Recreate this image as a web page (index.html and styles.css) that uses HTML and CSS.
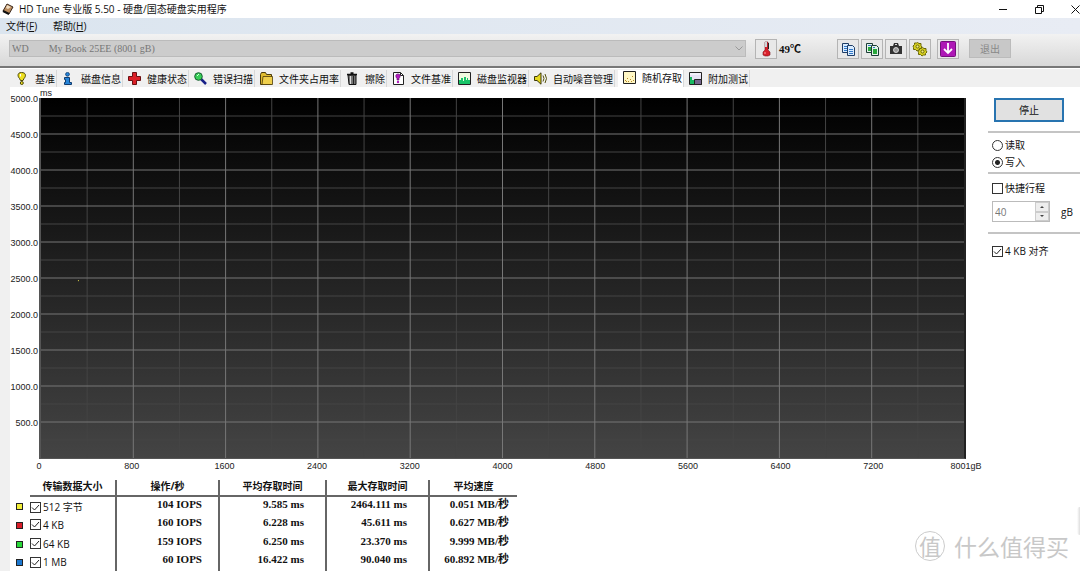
FILE: index.html
```html
<!DOCTYPE html>
<html lang="zh-CN">
<head>
<meta charset="utf-8">
<title>HD Tune 专业版 5.50 - 硬盘/国态硬盘实用程序</title>
<link rel="stylesheet" href="styles.css">
</head>
<body>
<div class="app">
  <header class="titlebar">
    <svg class="app-icon" viewBox="0 0 12 12"><path d="M1 8 5 1l6 3-4 7z" fill="#b98a5c" stroke="#3a281c"/><path d="M5 2l4 2-3 2-2-1z" fill="#f0dcc0"/><path d="M1 8l6 3" stroke="#111" stroke-width="2"/></svg>
    <h1 class="title">HD Tune 专业版 5.50 - 硬盘/国态硬盘实用程序</h1>
    <div class="win-controls">
      <button class="win-btn" aria-label="最小化"><svg viewBox="0 0 9 9"><path d="M0 4.500h8" stroke="#111"/></svg></button>
      <button class="win-btn" aria-label="还原"><svg viewBox="0 0 9 9" fill="none" stroke="#111"><path d="M.5 2.500h6v6h-6z"/><path d="M2.500 2.500v-2h6v6h-2"/></svg></button>
      <button class="win-btn" aria-label="关闭"><svg viewBox="0 0 9 9"><path d="M.5.5l8 8M8.500.5l-8 8" stroke="#111"/></svg></button>
    </div>
  </header>

  <nav class="menubar">
    <button class="menu-item">文件(<u>F</u>)</button>
    <button class="menu-item">帮助(<u>H</u>)</button>
  </nav>

  <div class="toolbar">
    <select class="drive" aria-label="驱动器" disabled>
      <option>WD&nbsp;&nbsp;&nbsp;&nbsp;&nbsp;&nbsp;&nbsp;&nbsp;My Book 25EE (8001 gB)</option>
    </select>
    <button class="tool" aria-label="温度"><svg viewBox="0 0 16 16"><path d="M7 1h3v8l2 2v3l-2 1H7l-2-1v-3l2-2z" fill="#d8202c" stroke="#7a1a20" stroke-width=".6"/><path d="M7 1h2v5H7z" fill="#cdd6da"/><path d="M10 2h1v6h-1" fill="#222"/><path d="M7 11v2" stroke="#ffa0a0"/></svg></button>
    <output class="temp">49℃</output>
    <div class="tool-group">
      <button class="tool" aria-label="复制文本"><svg viewBox="0 0 16 16"><path d="M2.500 2.500h6v9h-6z" fill="#d9ecff" stroke="#1f3d66"/><path d="M7.500 4.500h5l2 2v8h-7z" fill="#d9ecff" stroke="#1f3d66"/><path d="M4 5.500h3M4 7.500h3M4 9.500h3M9 8.500h4M9 10.500h4M9 12.500h4" stroke="#3278c8"/></svg></button>
      <button class="tool" aria-label="复制截图"><svg viewBox="0 0 16 16"><path d="M2.500 2.500h6v9h-6z" fill="#e4f4ea" stroke="#1c3d38"/><path d="M7.500 4.500h5l2 2v8h-7z" fill="#e4f4ea" stroke="#1c3d38"/><path d="M4 6h3v4H4zM9 8h4v5H9z" fill="#28a83c"/><path d="M4 4.500h3M9 6.500h2" stroke="#3278c8"/></svg></button>
      <button class="tool" aria-label="保存截图"><svg viewBox="0 0 16 16"><path d="M2 5h3l1-3h4l1 3h3v8H2z" fill="#333"/><path d="M7 3h2v1H7z" fill="#ddd"/><circle cx="8" cy="9" r="2.500" fill="#999" stroke="#eee" stroke-width=".8"/></svg></button>
      <button class="tool" aria-label="选项"><svg viewBox="0 0 16 16" fill="#d8d020" stroke="#6b6908"><path d="M5.500 1.500l1.500 1 2 0 0 2 1 1.500-1.500 1.500v1.500h-2l-1.500 1-1.500-1.500h-2v-2l-.5-1.500 1.500-1.500v-1.500h2z"/><path d="M10.500 6.500l1.500 1h2v2l1 1.500-1.500 1.500v1.500h-2l-1.500 1-1.500-1.500h-2v-2l-.5-1.500 1.500-1v-1.500h2z"/><circle cx="5.500" cy="5.500" r="1.500" fill="#f2ee80"/><circle cx="10.500" cy="10.500" r="1.500" fill="#f2ee80"/></svg></button>
    </div>
    <button class="tool tool-save" aria-label="保存"><svg viewBox="0 0 16 16"><rect x=".5" y=".5" width="15" height="15" rx="1" fill="#ae18b6" stroke="#74107c"/><path d="M8 2v10M4 8l4 4 4-4" fill="none" stroke="#fff" stroke-width="1.800"/></svg></button>
    <button class="exit" disabled>退出</button>
  </div>

  <div class="tabs" role="tablist">
    <button class="tab" role="tab"><svg viewBox="0 0 13 13"><path d="M5.500.5c5 0 4.500 4 2.500 6L7 8.500H4.500L3.500 6.500C1.500 4.500 1 .5 5.500.5z" fill="#eee022" stroke="#4d4807"/><path d="M4.500 2v2.500" stroke="#fff"/><circle cx="5.800" cy="11" r="1.500" fill="#eee022" stroke="#4d4807"/></svg>基准</button>
    <button class="tab" role="tab"><svg viewBox="0 0 13 13"><circle cx="5.500" cy="2.300" r="1.900" fill="#2584d8" stroke="#103c70" stroke-width=".8"/><path d="M2.500 5.500h5v5h2v2h-7v-2h1v-3h-1z" fill="#2584d8" stroke="#103c70"/></svg>磁盘信息</button>
    <button class="tab" role="tab"><svg viewBox="0 0 13 13"><path d="M4.500.5h4v4h4v4h-4v4h-4v-4h-4v-4h4z" fill="#dc2028" stroke="#6b1013"/></svg>健康状态</button>
    <button class="tab" role="tab"><svg viewBox="0 0 13 13"><path d="M7 7l5 5" stroke="#182088" stroke-width="2.500"/><circle cx="4.500" cy="4.500" r="3.800" fill="#38d058" stroke="#185c30"/><path d="M3 4l2-2" stroke="#d8ffe0"/></svg>错误扫描</button>
    <button class="tab" role="tab"><svg viewBox="0 0 13 13"><path d="M.5 2.500l1-2h4l1 2h5v10h-11z" fill="#e0bc30" stroke="#4c3b0a"/><path d="M3 4.500h9.500v8H2z" fill="#efcf4c" stroke="#4c3b0a" stroke-width=".8"/></svg>文件夹占用率</button>
    <button class="tab" role="tab"><svg viewBox="0 0 13 13"><path d="M2 3h8v9.500H3z" fill="#777" stroke="#111"/><path d="M1 2.500h10M4.500 1h3" stroke="#111" stroke-width="1.500"/><path d="M4.500 4v8" stroke="#ddd"/><path d="M7.500 4v8" stroke="#222"/></svg>擦除</button>
    <button class="tab" role="tab"><svg viewBox="0 0 13 13"><path d="M1.500.5h7l3 3v9h-10z" fill="#fff" stroke="#222"/><path d="M8.500.5v3h3" fill="none" stroke="#222"/><path d="M6 2c3 0 2.500 3 1 4.500V8H5V6.500C3.500 5 3 2 6 2z" fill="#b41cc0" stroke="#50105c" stroke-width=".6"/><circle cx="6" cy="10" r="1.200" fill="#b41cc0"/></svg>文件基准</button>
    <button class="tab" role="tab"><svg viewBox="0 0 13 13"><path d="M.5.500h12v12H.5z" fill="#f0fae0" stroke="#222"/><path d="M1 12V8h2V6h2v3h1V5h2v3h1V6h1v2h2v4z" fill="#18c468"/></svg>磁盘监视器</button>
    <button class="tab" role="tab"><svg viewBox="0 0 13 13"><path d="M.5 4.500H3L7 .8v11.400L3 8.500H.5z" fill="#e5d820" stroke="#3c380a"/><path d="M9 3.500q2 3 0 6M11 2q3 4.500 0 9" fill="none" stroke="#55510e"/></svg>自动噪音管理</button>
    <button class="tab tab-active" role="tab" aria-selected="true"><svg viewBox="0 0 13 13"><path d="M.5.500h12v12H.5z" fill="#fff7c4" stroke="#222"/><path d="M2 9.500h1M4 7.500h1M5 10.500h1M7 8.500h1M9 5.500h1M10 9.500h1M8 10.500h1M3 10.500h1" stroke="#b88828"/></svg>随机存取</button>
    <button class="tab" role="tab"><svg viewBox="0 0 13 13"><path d="M.5.500h12v12H.5z" fill="#e7e2f5" stroke="#222"/><path d="M1 12V5h2v3h2v4z" fill="#18b860"/><path d="M5.500 7.500h7v5h-7z" fill="#75668e" stroke="#222"/><path d="M1 2h11" stroke="#fff"/></svg>附加测试</button>
  </div>

  <main class="page">
    <section class="results">
      <div class="chart">
        <div class="y-axis">
          <span>5000.0</span><span>4500.0</span><span>4000.0</span><span>3500.0</span><span>3000.0</span><span>2500.0</span><span>2000.0</span><span>1500.0</span><span>1000.0</span><span>500.0</span>
        </div>
        <div class="plot-area">
          <span class="unit">ms</span>
          <svg class="plot" id="plot" role="img" aria-label="存取时间">
            <defs><linearGradient id="shade" x2="0" y2="1"><stop stop-color="#000"/><stop offset="1" stop-color="#444"/></linearGradient></defs>
            <rect width="100%" height="100%" fill="url(#shade)"/>
          </svg>
          <div class="x-axis">
            <span>0</span><span>800</span><span>1600</span><span>2400</span><span>3200</span><span>4000</span><span>4800</span><span>5600</span><span>6400</span><span>7200</span><span>8001gB</span>
          </div>
        </div>
      </div>

      <table class="stats">
        <thead>
          <tr><td class="key"></td><th class="size">传输数据大小</th><th class="iops">操作/秒</th><th class="avg">平均存取时间</th><th class="max">最大存取时间</th><th class="speed">平均速度</th></tr>
        </thead>
        <tbody>
          <tr><td class="key"><i class="swatch yellow"></i></td><td class="size"><label class="option"><input class="check" type="checkbox" checked>512 字节</label></td><td class="iops">104 IOPS</td><td class="avg">9.585 ms</td><td class="max">2464.111 ms</td><td class="speed">0.051 MB/秒</td></tr>
          <tr><td class="key"><i class="swatch red"></i></td><td class="size"><label class="option"><input class="check" type="checkbox" checked>4 KB</label></td><td class="iops">160 IOPS</td><td class="avg">6.228 ms</td><td class="max">45.611 ms</td><td class="speed">0.627 MB/秒</td></tr>
          <tr><td class="key"><i class="swatch green"></i></td><td class="size"><label class="option"><input class="check" type="checkbox" checked>64 KB</label></td><td class="iops">159 IOPS</td><td class="avg">6.250 ms</td><td class="max">23.370 ms</td><td class="speed">9.999 MB/秒</td></tr>
          <tr><td class="key"><i class="swatch blue"></i></td><td class="size"><label class="option"><input class="check" type="checkbox" checked>1 MB</label></td><td class="iops">60 IOPS</td><td class="avg">16.422 ms</td><td class="max">90.040 ms</td><td class="speed">60.892 MB/秒</td></tr>
        </tbody>
      </table>
    </section>

    <aside class="side">
      <div class="group group-run"><button class="stop">停止</button></div>
      <div class="group group-mode">
        <label class="option"><input class="radio" type="radio" name="mode">读取</label>
        <label class="option"><input class="radio" type="radio" name="mode" checked>写入</label>
      </div>
      <div class="group group-stroke">
        <label class="option"><input class="check" type="checkbox">快捷行程</label>
        <div class="size-row">
          <div class="spinner">
            <input class="spin-value" id="stroke" type="text" value="40" disabled>
            <div class="spin-buttons"><button class="spin up" aria-label="增加"></button><button class="spin down" aria-label="减少"></button></div>
          </div>
          <label for="stroke">gB</label>
        </div>
      </div>
      <div class="group group-align">
        <label class="option"><input class="check" type="checkbox" checked>4 KB 对齐</label>
      </div>
    </aside>
  </main>

  <div class="watermark"><span class="seal">值</span><span>什么值得买</span></div>
  <div class="edge-shadow"></div>
</div>
<script src="plot.js"></script>
</body>
</html>
```
FILE: plot.js
```js
const plot = document.getElementById("plot");

function line(x1, y1, x2, y2, kind) {
  const el = document.createElementNS("http://www.w3.org/2000/svg", "line");
  Object.entries({ x1, y1, x2, y2, class: kind }).forEach(([k, v]) => el.setAttribute(k, v));
  plot.append(el);
}

// Minor lines first, so that the major ones cross over them.
for (const major of [false, true]) {
  for (let i = major ? 2 : 1; i < 20; i += 2) {
    const at = i * 5 + "%";
    line(at, "0", at, "100%", major ? "major" : "minor");
    line("0", at, "100%", at, major ? "major" : "minor");
  }
}

const dot = document.createElementNS("http://www.w3.org/2000/svg", "rect");
Object.entries({ x: "4%", y: "50.6%", width: 1, height: 1, fill: "#e6dc50" })
  .forEach(([k, v]) => dot.setAttribute(k, v));
plot.append(dot);
```
FILE: styles.css
```css
* { box-sizing: border-box; }

body {
  margin: 0;
  background: #f0f0f0;
  color: #111;
  font: 10px/14px "Open Sans", "Noto Sans CJK SC", sans-serif;
}

button, input, select {
  margin: 0;
  padding: 0;
  border: 0;
  background: none;
  color: inherit;
  font: inherit;
}

svg { display: block; }

.app {
  position: relative;
  display: flex;
  flex-direction: column;
  min-height: 100vh;
  overflow: hidden;
}

.titlebar {
  display: flex;
  align-items: center;
  gap: 5px;
  height: 18px;
  padding-left: 2px;
  background: #fff;
}
.app-icon { width: 12px; height: 12px; }
.title { margin: 0; font-size: 10px; font-weight: 400; white-space: nowrap; }
.win-controls { display: flex; gap: 27px; margin-left: auto; }
.win-btn { width: 9px; height: 9px; }
.win-btn svg { width: 9px; height: 9px; }

.menubar {
  display: flex;
  gap: 16px;
  height: 16px;
  padding-left: 6px;
  background: linear-gradient(90deg, #dbe5ef, #e8ecf4);
}

.toolbar {
  display: flex;
  align-items: center;
  height: 34px;
  padding: 0 69px 3px 9px;
  border-bottom: 2px solid #777;
  background: linear-gradient(#f2f2f2, #d8d8d8);
}
.drive {
  flex: 1;
  min-width: 0;
  height: 17px;
  padding: 0 14px 0 2px;
  border: 1px solid #bbb;
  appearance: none;
  background: #ccc url("data:image/svg+xml,%3Csvg xmlns='http://www.w3.org/2000/svg' width='8' height='5'%3E%3Cpath d='M.5.5 4 4 7.5.5' fill='none' stroke='%23999'/%3E%3C/svg%3E") no-repeat right 2px center;
  color: #777;
  opacity: 1;
  font: 10px/14px "Liberation Serif", serif;
}
.tool {
  display: grid;
  place-items: center;
  flex: none;
  width: 22px;
  height: 20px;
  border: 1px solid #b4b4b4;
  background: #e8e8e8;
}
.tool svg { width: 16px; height: 16px; }
.drive + .tool { margin-left: 9px; }
.temp {
  width: 60px;
  padding-left: 2px;
  font: bold 11px/14px "Liberation Serif", "Noto Sans CJK SC", serif;
}
.tool-group { display: flex; gap: 2px; }
.tool-save { margin-left: 6px; }
.exit {
  flex: none;
  width: 42px;
  height: 19px;
  margin-left: 10px;
  border: 1px solid #bbb;
  background: #c8c8c8;
  color: #888;
}

.tabs {
  display: flex;
  height: 19px;
  padding: 1px 0 0 11px;
  border-top: 1px solid #fff;
}
.tab {
  display: flex;
  align-items: center;
  gap: 6px;
  padding: 0 1px 0 5px;
  border-right: 1px solid #d8d8d8;
  white-space: nowrap;
}
.tab svg { flex: none; width: 13px; height: 13px; }
.tab-active { margin-left: 3px; padding-bottom: 2px; background: #fff; }

.page {
  display: flex;
  flex: 1;
  gap: 22px;
  margin-left: 10px;
  background: #fff;
}
.results { display: flex; flex: 1; flex-direction: column; min-width: 0; }

.chart {
  display: flex;
  color: #222;
  font: 9px/12px "Liberation Sans", Arial, sans-serif;
}
.y-axis { display: flex; flex: none; flex-direction: column; width: 29px; padding-top: 6px; }
.y-axis span {
  height: 36px;
  padding-right: 1px;
  text-align: right;
}
.plot-area { flex: 1; min-width: 0; }
.unit { display: block; height: 11px; padding-left: 1px; }
.plot { width: 100%; height: 361px; border-left: 2px solid #555; border-right: 2px solid #222; border-bottom: 1px solid #555; }
.major { stroke: #777; }
.minor { stroke: #444; }
.x-axis {
  display: grid;
  grid-template-columns: repeat(11, 1fr);
  margin: 1px -5% 0;
  text-align: center;
}

.stats {
  flex: 1;
  align-self: flex-start;
  margin-top: 8px;
  border-collapse: collapse;
  table-layout: fixed;
  width: 507px;
}
.stats th, .stats td { height: 18px; padding: 0; vertical-align: top; }
.stats thead td, .stats th { height: 16px; }
.stats th { border-bottom: 2px solid #666; font-size: 10px; line-height: 12px; }
.stats tbody td {
  font: bold 11px/15px "Liberation Serif", "Noto Sans CJK SC", serif;
  text-align: right;
}
.stats .size, .stats .iops, .stats .avg, .stats .max { border-right: 2px solid #666; }
.stats .key { width: 20px; }
.stats .size { width: 86px; }
.stats .iops { width: 103px; }
.stats .avg { width: 107px; }
.stats .max { width: 103px; }
.stats tbody .iops { padding-right: 16px; }
.stats tbody .avg, .stats tbody .max { padding-right: 21px; }
.stats tbody .speed { padding-right: 8px; }
.stats tbody .size { padding-top: 3px; font: inherit; text-align: left; }
.stats tbody .key { padding: 7px 0 0 6px; }
.swatch { display: block; width: 7px; height: 7px; border: 1px solid #222; }
.yellow { background: #f2ee38; }
.red { background: #d81c28; }
.green { background: #28d838; }
.blue { background: #1c78d0; }

.option { display: flex; align-items: center; gap: 2px; height: 14px; white-space: nowrap; }
.check, .radio {
  flex: none;
  width: 11px;
  height: 11px;
  border: 1px solid #333;
  appearance: none;
  background: #fff no-repeat center;
}
.check:checked {
  background-image: url("data:image/svg+xml,%3Csvg xmlns='http://www.w3.org/2000/svg' width='9' height='9'%3E%3Cpath d='M1 4.500 3.500 7 8 2' fill='none' stroke='%23222'/%3E%3C/svg%3E");
}
.radio { border-radius: 50%; }
.radio:checked { background: radial-gradient(circle, #222 0 2px, #fff 3px); }

.side { flex: none; width: 92px; }
.group { border-bottom: 2px solid #c4c4c4; padding-left: 4px; }
.group-run { padding: 11px 0 9px 6px; }
.stop {
  width: 70px;
  height: 24px;
  border: 2px solid #2874b0;
  background: #e1e1e1;
}
.group-mode { display: grid; gap: 3px; padding-top: 5px; padding-bottom: 3px; }
.group-stroke { padding-top: 7px; padding-bottom: 10px; }
.size-row { display: flex; align-items: center; gap: 11px; margin-top: 6px; }
.spinner { display: flex; width: 58px; height: 21px; border: 1px solid #bbb; }
.spin-value { flex: 1; min-width: 0; padding-left: 2px; color: #777; }
.spin-buttons { display: grid; width: 14px; }
.spin { display: grid; place-items: center; border: 1px solid #ccc; background: #eee; }
.spin::before { content: ""; border: 2px solid transparent; }
.up::before { border-top: 0; border-bottom-color: #444; }
.down::before { border-bottom: 0; border-top-color: #444; }
.group-align { padding-top: 10px; border: 0; }

.watermark {
  position: absolute;
  right: 11px;
  bottom: 10px;
  display: flex;
  align-items: center;
  gap: 9px;
  color: #c8c8c8;
  font: 23px/30px "Noto Sans CJK SC", sans-serif;
}
.seal {
  width: 30px;
  height: 30px;
  border: 1px solid #ccc;
  border-radius: 50%;
  font-size: 22px;
  line-height: 26px;
  text-align: center;
}
.edge-shadow {
  position: absolute;
  right: 0;
  bottom: 36px;
  width: 3px;
  height: 28px;
  border-radius: 3px 0 0 3px;
  background: linear-gradient(90deg, #fff, #ddd);
}
```
